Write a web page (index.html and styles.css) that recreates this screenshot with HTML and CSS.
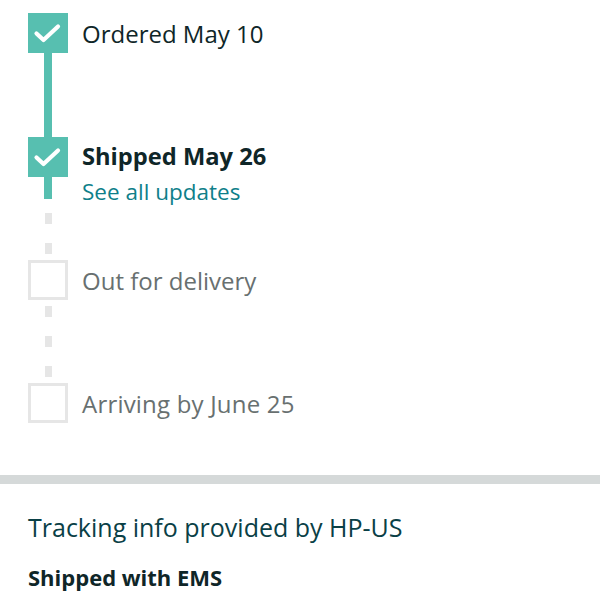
FILE: index.html
```html
<!DOCTYPE html>
<html>
<head>
<meta charset="utf-8">
<link rel="stylesheet" href="styles.css">
</head>
<body>
<div class="page">
  <div class="timeline">
    <div class="rail"><div class="box done"><svg viewBox="0 0 40 40" width="40" height="40"><path d="M8.5 20.5 L15.5 27 L30 13.5" fill="none" stroke="#fff" stroke-width="4.2" stroke-linecap="round" stroke-linejoin="round"/></svg></div></div>
    <div class="label done-text">Ordered May 10</div>

    <div class="rail"><div class="line solid tall1"></div></div>
    <div></div>

    <div class="rail"><div class="box done"><svg viewBox="0 0 40 40" width="40" height="40"><path d="M8.5 20.5 L15.5 27 L30 13.5" fill="none" stroke="#fff" stroke-width="4.2" stroke-linecap="round" stroke-linejoin="round"/></svg></div></div>
    <div class="label current">Shipped May 26</div>

    <div class="rail rail-col"><div class="line solid short"></div><div class="line dashed shift"></div></div>
    <div class="sub"><a class="link" href="#">See all updates</a></div>

    <div class="rail"><div class="box pending"></div></div>
    <div class="label pending-text">Out for delivery</div>

    <div class="rail"><div class="line dashed tall3"></div></div>
    <div></div>

    <div class="rail"><div class="box pending"></div></div>
    <div class="label pending-text">Arriving by June 25</div>
  </div>

  <div class="divider"></div>

  <section class="info">
    <h2 class="info-title">Tracking info provided by HP-US</h2>
    <p class="info-sub">Shipped with EMS</p>
  </section>
</div>
</body>
</html>
```
FILE: styles.css
```css
* { box-sizing: border-box; }
html, body { margin: 0; padding: 0; background: #fff; }
body { font-family: "Open Sans", "Noto Sans", sans-serif; }
.page { width: 600px; padding-top: 13px; }
.timeline {
  display: grid;
  grid-template-columns: 40px 1fr;
  column-gap: 14px;
  padding-left: 28px;
}
.rail { display: flex; flex-direction: column; align-items: center; }
.box { width: 40px; height: 40px; }
.box svg { display: block; }
.box.done { background: #57bfb0; }
.box.pending { border: 3px solid #e6e6e6; }
.line { width: 8px; }
.solid { background: #57bfb0; }
.tall1 { height: 84px; }
.short { height: 22px; }
.dashed {
  width: 7px;
  background-image: repeating-linear-gradient(to bottom, transparent 0 6px, #e6e6e6 6px 17px, transparent 17px 30px);
}
.shift { height: 61px; background-position: 0 8px; }
.tall3 { height: 83px; }
.label {
  display: flex;
  align-items: center;
  height: 40px;
  font-size: 24px;
  font-weight: 500;
}
.done-text { color: #0f2628; }
.current { color: #0f2628; font-weight: 700; font-size: 23.7px; padding-bottom: 2px; }
.pending-text { color: #687070; }
.pending-text:last-child { letter-spacing: 0.2px; }
.sub { padding-top: 1px; }
.link { color: #0f7f8a; text-decoration: none; font-size: 22.5px; font-weight: 500; line-height: 28px; }
.divider { height: 9px; background: #d5d9d9; margin-top: 52px; }
.info { padding: 0 28px; }
.info-title {
  margin: 26px 0 0;
  font-size: 25px;
  font-weight: 500;
  color: #0a4046;
  line-height: 34px;
}
.info-sub {
  margin: 19px 0 0;
  font-size: 22px;
  font-weight: 700;
  color: #0f2628;
  line-height: 28px;
}
```
